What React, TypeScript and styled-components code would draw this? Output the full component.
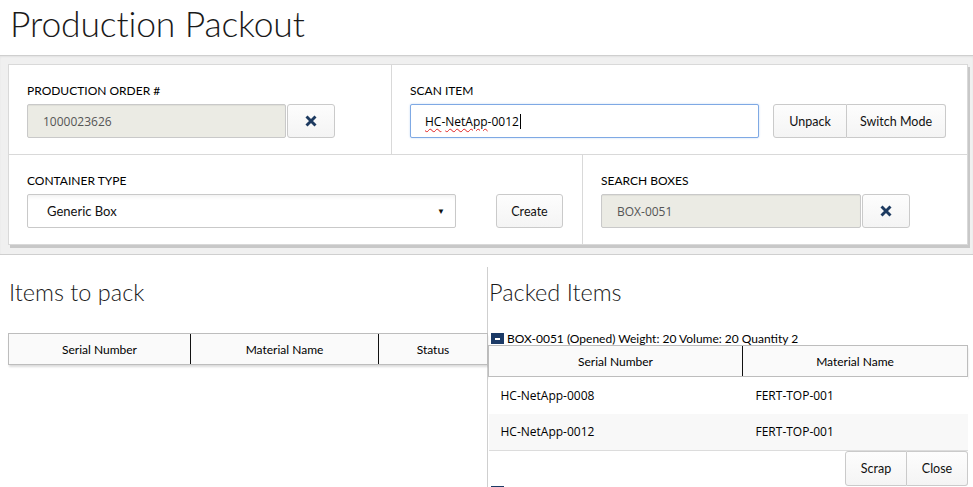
import React from "react";
import styled, { createGlobalStyle } from "styled-components";

const GlobalStyle = createGlobalStyle`
  html, body { margin: 0; padding: 0; background: #fff; }
  body { font-family: Lato, "Open Sans", Arial, sans-serif; color: #222; overflow: hidden; }
  * { box-sizing: border-box; }
`;

const Page = styled.div`
  width: 973px;
`;

const TitleBar = styled.header`
  height: 55px;
  padding: 2px 0 0 10px;
`;

const Title = styled.h1`
  margin: 0;
  font-weight: 300;
  font-size: 35.5px;
  letter-spacing: -0.15px;
  line-height: 43px;
  color: #1a1a1a;
`;

const FormArea = styled.section`
  background: #f0f0f0;
  border-top: 1px solid #cfcfcf;
  border-bottom: 1px solid #cfcfcf;
  box-shadow: inset 0 1px 2px rgba(0, 0, 0, 0.06);
  padding: 8px 5px 9px 8px;
`;

const Panel = styled.div`
  background: #fff;
  border: 1px solid #d9d9d9;
  box-shadow: 2px 3px 0 #c8c8c8;
`;

const PanelRow = styled.div`
  display: flex;
  & + & {
    border-top: 1px solid #d9d9d9;
  }
`;

const Cell = styled.div<{ $w?: number }>`
  padding: 18px 18px 16px;
  ${(p) =>
    p.$w
      ? `width: ${p.$w}px; flex: none; border-right: 1px solid #d9d9d9;`
      : `flex: 1;`}
`;

const FieldLabel = styled.div`
  font-size: 12px;
  line-height: 16px;
  text-transform: uppercase;
  color: #000;
  margin-bottom: 5px;
`;

const Controls = styled.div`
  display: flex;
  align-items: center;
  height: 34px;
`;

const ReadField = styled.input<{ $w: number }>`
  width: ${(p) => p.$w}px;
  height: 34px;
  padding: 0 15px;
  border: 1px solid #c9c9c9;
  border-radius: 2px;
  background: #ebebe4;
  box-shadow: inset 0 1px 1px rgba(0, 0, 0, 0.06);
  font-family: "Open Sans", Arial, sans-serif;
  font-size: 12px;
  color: #555;
  outline: none;
`;

const FocusField = styled.div<{ $w: number }>`
  width: ${(p) => p.$w}px;
  height: 34px;
  padding: 0 14px;
  display: flex;
  align-items: center;
  border: 1px solid #7fa9e4;
  border-radius: 2px;
  background: #fff;
  box-shadow: 0 0 2px rgba(102, 160, 233, 0.45);
  font-family: "Open Sans", Arial, sans-serif;
  font-size: 12px;
  color: #000;
`;

const Misspelled = styled.span`
  text-decoration: underline wavy #e02020;
  text-decoration-thickness: 1px;
  text-underline-offset: 2px;
`;

const Caret = styled.span`
  display: inline-block;
  width: 1px;
  height: 15px;
  background: #000;
  margin-left: 1px;
`;

const Button = styled.button<{ $w: number; $h?: number; $join?: "left" | "right" }>`
  width: ${(p) => p.$w}px;
  height: ${(p) => p.$h ?? 34}px;
  flex: none;
  padding: 0;
  border: 1px solid #cacaca;
  border-radius: ${(p) =>
    p.$join === "left" ? "3px 0 0 3px" : p.$join === "right" ? "0 3px 3px 0" : "3px"};
  ${(p) => (p.$join === "right" ? "border-left: none;" : "")}
  background: linear-gradient(#fdfdfd, #f4f4f4);
  font-family: Lato, Arial, sans-serif;
  font-size: 12.5px;
  color: #111;
  display: flex;
  align-items: center;
  justify-content: center;
`;

const Spacer = styled.div<{ $w: number }>`
  width: ${(p) => p.$w}px;
  flex: none;
`;

const SelectBox = styled.div<{ $w: number }>`
  width: ${(p) => p.$w}px;
  height: 34px;
  display: flex;
  align-items: center;
  justify-content: space-between;
  padding: 0 10px 0 19px;
  border: 1px solid #c9c9c9;
  border-radius: 2px;
  background: #fff;
  box-shadow: inset 0 4px 5px -3px rgba(0, 0, 0, 0.08);
  font-size: 13px;
  color: #111;
`;

const Arrow = styled.span`
  font-size: 8px;
  color: #111;
`;

const Lower = styled.div`
  display: grid;
  grid-template-columns: 488px 1fr;
  margin-top: 12px;
`;

const Column = styled.div<{ $left?: boolean }>`
  padding: 11px ${(p) => (p.$left ? "0 0 8px" : "6px 0 0")};
  ${(p) => (p.$left ? "border-right: 1px solid #cfcfcf;" : "")}
  min-height: 220px;
`;

const SectionTitle = styled.h2<{ $indent?: number }>`
  margin: 0;
  padding-left: ${(p) => p.$indent ?? 0}px;
  font-weight: 300;
  font-size: 23.5px;
  line-height: 29px;
  color: #1a1a1a;
`;

const Table = styled.table<{ $gap?: number }>`
  width: 479px;
  border-collapse: collapse;
  margin-top: ${(p) => p.$gap ?? 0}px;
  table-layout: fixed;
`;

const HeadRow = styled.tr`
  box-shadow: 0 2px 2px rgba(0, 0, 0, 0.14);
`;

const Th = styled.th<{ $w: number }>`
  width: ${(p) => p.$w}px;
  height: 31px;
  padding: 0;
  background: #fafafa;
  border-top: 1px solid #bdbdbd;
  border-bottom: 1px solid #bdbdbd;
  font-size: 12px;
  font-weight: 400;
  color: #000;
  text-align: center;
  &:first-child {
    border-left: 1px solid #bdbdbd;
  }
  &:last-child {
    border-right: 1px solid #bdbdbd;
  }
  & + & {
    border-left: 1px solid #111;
  }
`;

const DataRow = styled.tr<{ $striped?: boolean }>`
  background: ${(p) => (p.$striped ? "#f8f8f8" : "#fff")};
  ${(p) => (p.$striped ? "border-bottom: 1px solid #dcdcdc;" : "")}
`;

const Td = styled.td`
  height: 37px;
  padding: 0 12px;
  font-family: "Open Sans", Arial, sans-serif;
  font-size: 12px;
  color: #000;
  & + & {
    padding-left: 13px;
  }
`;

const BoxHeader = styled.div<{ $gap?: number }>`
  display: flex;
  align-items: center;
  height: 13px;
  margin-top: ${(p) => p.$gap ?? 0}px;
  font-size: 12px;
  line-height: 13px;
  color: #000;
`;

const MinusIcon = styled.span`
  position: relative;
  width: 13px;
  height: 11px;
  margin: 0 3px 0 3px;
  background: #1b3a66;
  flex: none;
  &::after {
    content: "";
    position: absolute;
    left: 4px;
    right: 4px;
    top: 5px;
    height: 2px;
    background: #fff;
  }
`;

const Footer = styled.div`
  display: flex;
  justify-content: flex-end;
  height: 34px;
  width: 480px;
`;

const CloseIcon = () => (
  <svg width="12" height="12" viewBox="0 0 12 12">
    <path d="M1.5 1.5 L10.5 10.5 M10.5 1.5 L1.5 10.5" stroke="#1d3a60" strokeWidth="2.9" strokeLinecap="butt" />
  </svg>
);

export default function App() {
  return (
    <Page>
      <GlobalStyle />
      <TitleBar>
        <Title>Production Packout</Title>
      </TitleBar>
      <FormArea>
        <Panel>
          <PanelRow>
            <Cell $w={383}>
              <FieldLabel>Production Order #</FieldLabel>
              <Controls>
                <ReadField $w={259} value="1000023626" readOnly />
                <Spacer $w={1} />
                <Button $w={48}>
                  <CloseIcon />
                </Button>
              </Controls>
            </Cell>
            <Cell>
              <FieldLabel>Scan Item</FieldLabel>
              <Controls>
                <FocusField $w={349}>
                  <Misspelled>HC</Misspelled>-<Misspelled>NetApp</Misspelled>-0012
                  <Caret />
                </FocusField>
                <Spacer $w={14} />
                <Button $w={74} $join="left">Unpack</Button>
                <Button $w={99} $join="right">Switch Mode</Button>
              </Controls>
            </Cell>
          </PanelRow>
          <PanelRow>
            <Cell $w={574}>
              <FieldLabel>Container Type</FieldLabel>
              <Controls>
                <SelectBox $w={429}>
                  <span>Generic Box</span>
                  <Arrow>▼</Arrow>
                </SelectBox>
                <Spacer $w={40} />
                <Button $w={67}>Create</Button>
              </Controls>
            </Cell>
            <Cell>
              <FieldLabel>Search Boxes</FieldLabel>
              <Controls>
                <ReadField $w={260} value="BOX-0051" readOnly />
                <Spacer $w={1} />
                <Button $w={48}>
                  <CloseIcon />
                </Button>
              </Controls>
            </Cell>
          </PanelRow>
        </Panel>
      </FormArea>
      <Lower>
        <Column $left>
          <SectionTitle $indent={1}>Items to pack</SectionTitle>
          <Table $gap={26}>
            <thead>
              <HeadRow>
                <Th $w={182}>Serial Number</Th>
                <Th $w={188}>Material Name</Th>
                <Th $w={109}>Status</Th>
              </HeadRow>
            </thead>
          </Table>
        </Column>
        <Column>
          <SectionTitle $indent={1}>Packed Items</SectionTitle>
          <BoxHeader $gap={25}>
            <MinusIcon />
            BOX-0051 (Opened) Weight: 20 Volume: 20 Quantity 2
          </BoxHeader>
          <Table>
            <thead>
              <HeadRow>
                <Th $w={254}>Serial Number</Th>
                <Th $w={225}>Material Name</Th>
              </HeadRow>
            </thead>
            <tbody>
              <DataRow>
                <Td>HC-NetApp-0008</Td>
                <Td>FERT-TOP-001</Td>
              </DataRow>
              <DataRow $striped>
                <Td>HC-NetApp-0012</Td>
                <Td>FERT-TOP-001</Td>
              </DataRow>
            </tbody>
          </Table>
          <Footer>
            <Button $w={62} $h={35} $join="left">Scrap</Button>
            <Button $w={61} $h={35} $join="right">Close</Button>
          </Footer>
          <BoxHeader>
            <MinusIcon />
          </BoxHeader>
        </Column>
      </Lower>
    </Page>
  );
}
